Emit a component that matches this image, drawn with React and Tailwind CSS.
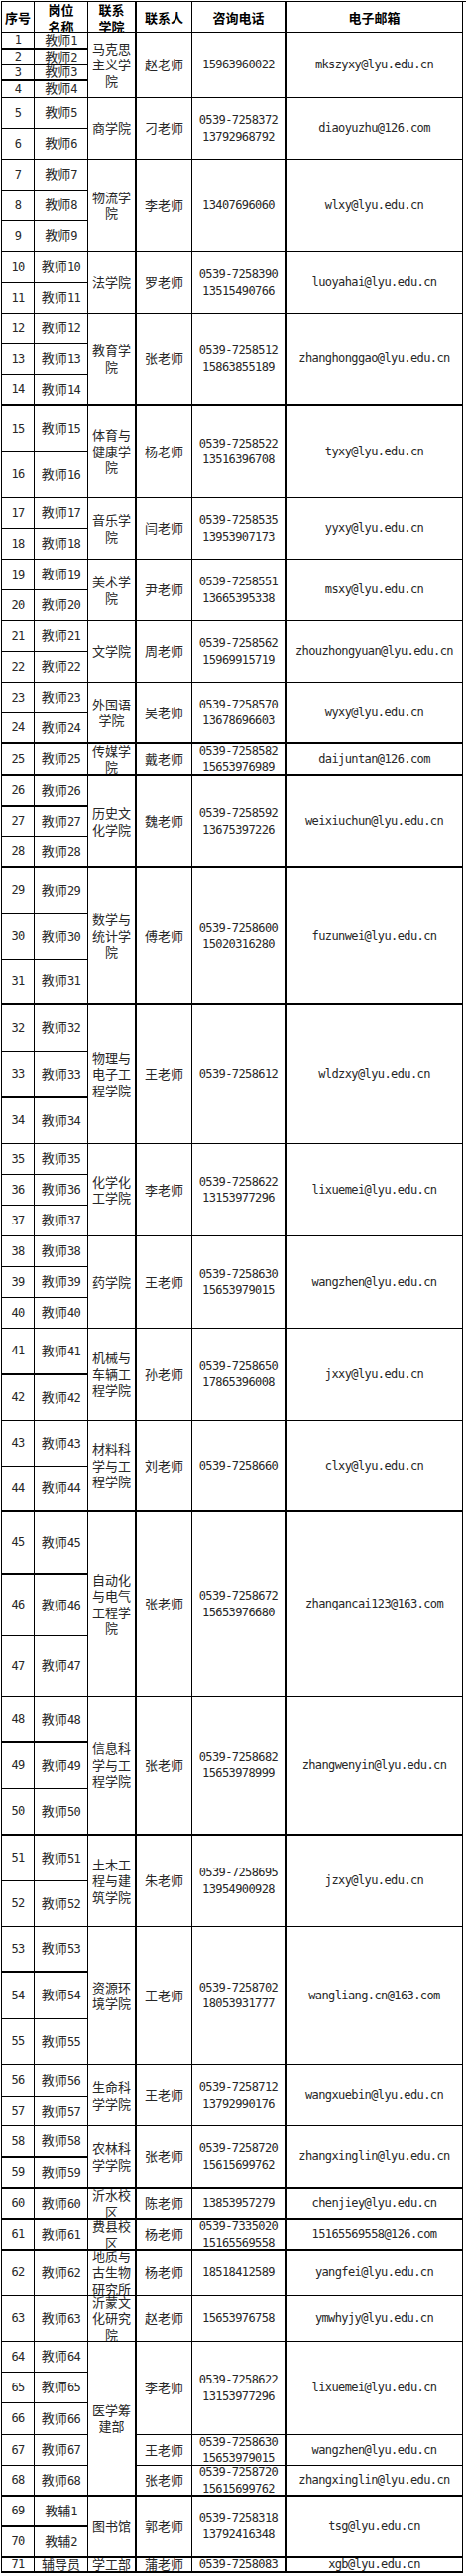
import React from "react";
import clsx from "clsx";

// 招聘岗位联系方式表 — rows sized to match the sheet, spans follow the merged cells
const groups = [
  { college: "马克思主义学院", n: 4, contacts: [{ name: "赵老师", phone: ["15963960022"], email: "mkszyxy@lyu.edu.cn" }] },
  { college: "商学院", n: 2, contacts: [{ name: "刁老师", phone: ["0539-7258372", "13792968792"], email: "diaoyuzhu@126.com" }] },
  { college: "物流学院", n: 3, contacts: [{ name: "李老师", phone: ["13407696060"], email: "wlxy@lyu.edu.cn" }] },
  { college: "法学院", n: 2, contacts: [{ name: "罗老师", phone: ["0539-7258390", "13515490766"], email: "luoyahai@lyu.edu.cn" }] },
  { college: "教育学院", n: 3, contacts: [{ name: "张老师", phone: ["0539-7258512", "15863855189"], email: "zhanghonggao@lyu.edu.cn" }] },
  { college: "体育与健康学院", n: 2, contacts: [{ name: "杨老师", phone: ["0539-7258522", "13516396708"], email: "tyxy@lyu.edu.cn" }] },
  { college: "音乐学院", n: 2, contacts: [{ name: "闫老师", phone: ["0539-7258535", "13953907173"], email: "yyxy@lyu.edu.cn" }] },
  { college: "美术学院", n: 2, contacts: [{ name: "尹老师", phone: ["0539-7258551", "13665395338"], email: "msxy@lyu.edu.cn" }] },
  { college: "文学院", n: 2, contacts: [{ name: "周老师", phone: ["0539-7258562", "15969915719"], email: "zhouzhongyuan@lyu.edu.cn" }] },
  { college: "外国语学院", n: 2, contacts: [{ name: "吴老师", phone: ["0539-7258570", "13678696603"], email: "wyxy@lyu.edu.cn" }] },
  { college: "传媒学院", n: 1, contacts: [{ name: "戴老师", phone: ["0539-7258582", "15653976989"], email: "daijuntan@126.com" }] },
  { college: "历史文化学院", n: 3, contacts: [{ name: "魏老师", phone: ["0539-7258592", "13675397226"], email: "weixiuchun@lyu.edu.cn" }] },
  { college: "数学与统计学院", n: 3, contacts: [{ name: "傅老师", phone: ["0539-7258600", "15020316280"], email: "fuzunwei@lyu.edu.cn" }] },
  { college: "物理与电子工程学院", n: 3, contacts: [{ name: "王老师", phone: ["0539-7258612"], email: "wldzxy@lyu.edu.cn" }] },
  { college: "化学化工学院", n: 3, contacts: [{ name: "李老师", phone: ["0539-7258622", "13153977296"], email: "lixuemei@lyu.edu.cn" }] },
  { college: "药学院", n: 3, contacts: [{ name: "王老师", phone: ["0539-7258630", "15653979015"], email: "wangzhen@lyu.edu.cn" }] },
  { college: "机械与车辆工程学院", n: 2, contacts: [{ name: "孙老师", phone: ["0539-7258650", "17865396008"], email: "jxxy@lyu.edu.cn" }] },
  { college: "材料科学与工程学院", n: 2, contacts: [{ name: "刘老师", phone: ["0539-7258660"], email: "clxy@lyu.edu.cn" }] },
  { college: "自动化与电气工程学院", n: 3, contacts: [{ name: "张老师", phone: ["0539-7258672", "15653976680"], email: "zhangancai123@163.com" }] },
  { college: "信息科学与工程学院", n: 3, contacts: [{ name: "张老师", phone: ["0539-7258682", "15653978999"], email: "zhangwenyin@lyu.edu.cn" }] },
  { college: "土木工程与建筑学院", n: 2, contacts: [{ name: "朱老师", phone: ["0539-7258695", "13954900928"], email: "jzxy@lyu.edu.cn" }] },
  { college: "资源环境学院", n: 3, contacts: [{ name: "王老师", phone: ["0539-7258702", "18053931777"], email: "wangliang.cn@163.com" }] },
  { college: "生命科学学院", n: 2, contacts: [{ name: "王老师", phone: ["0539-7258712", "13792990176"], email: "wangxuebin@lyu.edu.cn" }] },
  { college: "农林科学学院", n: 2, contacts: [{ name: "张老师", phone: ["0539-7258720", "15615699762"], email: "zhangxinglin@lyu.edu.cn" }] },
  { college: "沂水校区", n: 1, contacts: [{ name: "陈老师", phone: ["13853957279"], email: "chenjiey@lyu.edu.cn" }] },
  { college: "费县校区", n: 1, contacts: [{ name: "杨老师", phone: ["0539-7335020", "15165569558"], email: "15165569558@126.com" }] },
  { college: "地质与古生物研究所", n: 1, contacts: [{ name: "杨老师", phone: ["18518412589"], email: "yangfei@lyu.edu.cn" }] },
  { college: "沂蒙文化研究院", n: 1, contacts: [{ name: "赵老师", phone: ["15653976758"], email: "ymwhyjy@lyu.edu.cn" }] },
  {
    college: "医学筹建部",
    n: 5,
    contacts: [
      { name: "李老师", span: 3, phone: ["0539-7258622", "13153977296"], email: "lixuemei@lyu.edu.cn" },
      { name: "王老师", span: 1, phone: ["0539-7258630", "15653979015"], email: "wangzhen@lyu.edu.cn" },
      { name: "张老师", span: 1, phone: ["0539-7258720", "15615699762"], email: "zhangxinglin@lyu.edu.cn" },
    ],
  },
  { college: "图书馆", n: 2, contacts: [{ name: "郭老师", phone: ["0539-7258318", "13792416348"], email: "tsg@lyu.edu.cn" }] },
  { college: "学工部", n: 1, contacts: [{ name: "蒲老师", phone: ["0539-7258083"], email: "xgb@lyu.edu.cn" }] },
];

const thickFull = new Set([14, 24, 25, 28, 31, 44, 50, 59, 60, 61, 68, 70, 71]);
const thickLeft = new Set([1, 3, 26, 27, 33, 41, 45, 48, 53, 58, 69]);

const COL = { 1: "col-start-1", 2: "col-start-2", 3: "col-start-3", 4: "col-start-4", 5: "col-start-5", 6: "col-start-6" };
const SPAN = { 1: "row-span-1", 2: "row-span-2", 3: "row-span-3", 4: "row-span-4", 5: "row-span-5" };

const cjk = "font-['Noto_Sans_CJK_SC',sans-serif]";
const mono = "font-['DejaVu_Sans_Mono',monospace] text-[12px] tracking-[-0.6px]";

const Cell = ({ col, span = 1, thick, className, children }) => (
  <div
    className={clsx(
      "flex min-h-0 min-w-0 items-center justify-center overflow-hidden border-black text-center leading-[16.5px]",
      COL[col],
      SPAN[span],
      thick ? "border-b-2" : "border-b",
      col === 3 || col === 5 ? "border-r-2" : "border-r",
      className
    )}
  >
    {children}
  </div>
);

const chunk = (s) => {
  const out = [];
  for (let i = 0; i < s.length; i += 3) out.push(s.slice(i, i + 3));
  return out;
};

const Lines = ({ items }) => (
  <div>
    {items.map((t, i) => (
      <div key={i} className="whitespace-nowrap">
        {t}
      </div>
    ))}
  </div>
);

const post = (i) => {
  if (i === 69) return ["教辅", "1"];
  if (i === 70) return ["教辅", "2"];
  if (i === 71) return ["辅导员", ""];
  return ["教师", String(i)];
};

export default function App() {
  const cells = [];
  let row = 1;

  groups.forEach((g, gi) => {
    const groupEnd = row + g.n - 1;
    let contactRow = row;
    const contactStarts = {};
    g.contacts.forEach((c) => {
      const span = c.span || g.n;
      contactStarts[contactRow] = { ...c, span, end: contactRow + span - 1 };
      contactRow += span;
    });

    for (let r = row; r <= groupEnd; r++) {
      const edge = thickFull.has(r) || thickLeft.has(r);
      const [word, num] = post(r);
      cells.push(
        <Cell key={`n${r}`} col={1} thick={edge}>
          <span className={mono}>{r}</span>
        </Cell>
      );
      cells.push(
        <Cell key={`p${r}`} col={2} thick={edge}>
          <span className="whitespace-nowrap">
            <span className={cjk}>{word}</span>
            <span className={mono}>{num}</span>
          </span>
        </Cell>
      );
      if (r === row) {
        cells.push(
          <Cell key={`c${gi}`} col={3} span={g.n} thick={thickFull.has(groupEnd)}>
            <Lines items={chunk(g.college)} />
          </Cell>
        );
      }
      const c = contactStarts[r];
      if (c) {
        const t = thickFull.has(c.end);
        cells.push(
          <Cell key={`k${r}`} col={4} span={c.span} thick={t}>
            {c.name}
          </Cell>,
          <Cell key={`t${r}`} col={5} span={c.span} thick={t}>
            <div className={mono}>
              <Lines items={c.phone} />
            </div>
          </Cell>,
          <Cell key={`e${r}`} col={6} span={c.span} thick={t}>
            <span className={clsx(mono, "whitespace-nowrap")}>{c.email}</span>
          </Cell>
        );
      }
    }
    row = groupEnd + 1;
  });

  return (
    <div className="min-h-[2596px] w-[470px] bg-white pl-[1px] pt-[1px]">
      <div
        className={clsx(
          "grid grid-cols-[33px_54px_49px_56px_95px_178px] border-l border-t border-black text-[13px] text-[#262626]",
          "grid-rows-[31px_17px_16px_16px_17px_31px_31px_31px_31px_31px_31px_31px_31px_31px_31px_47px_46px_31px_31px_31px_31px_31px_31px_31px_31px_32px_31px_31px_31px_46px_46px_46px_47px_47px_46px_31px_31px_31px_31px_31px_31px_47px_46px_46px_46px_63px_62px_61px_47px_46px_47px_46px_46px_46px_47px_46px_32px_30px_32px_31px_31px_31px_46px_46px_31px_31px_32px_31px_31px_31px_31px_15px]",
          cjk
        )}
      >
        {/* header */}
        <Cell col={1} className="pt-[2px] font-bold text-black">序号</Cell>
        <Cell col={2} className="pt-[3px] font-bold text-black">
          <Lines items={["岗位", "名称"]} />
        </Cell>
        <Cell col={3} className="pt-[3px] font-bold text-black">
          <Lines items={["联系", "学院"]} />
        </Cell>
        <Cell col={4} className="pt-[2px] font-bold text-black">联系人</Cell>
        <Cell col={5} className="pt-[2px] font-bold text-black">咨询电话</Cell>
        <Cell col={6} className="pt-[2px] font-bold text-black">电子邮箱</Cell>
        {cells}
      </div>
    </div>
  );
}
